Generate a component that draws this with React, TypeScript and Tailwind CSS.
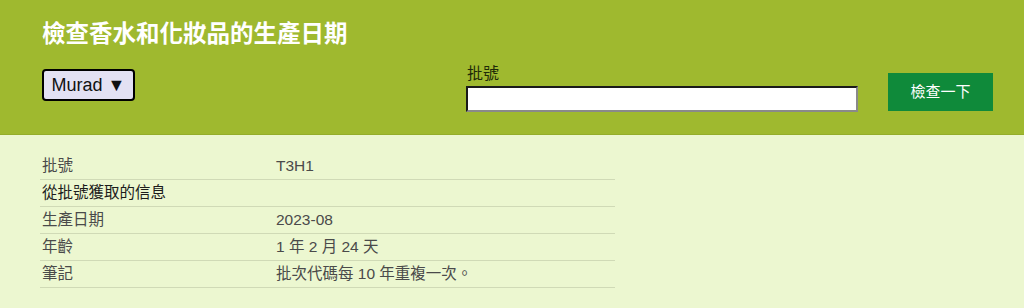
import React from "react";

const rows: { label: string; value: string; head?: boolean }[] = [
  { label: "批號", value: "T3H1" },
  { label: "從批號獲取的信息", value: "", head: true },
  { label: "生產日期", value: "2023-08" },
  { label: "年齡", value: "1 年 2 月 24 天" },
  { label: "筆記", value: "批次代碼每 10 年重複一次。" },
];

export default function App() {
  return (
    <div className="min-h-[308px] bg-[#ecf7d0] font-['Liberation_Sans','Noto_Sans_CJK_TC',sans-serif]">
      {/* header */}
      <div className="h-[135px] bg-[#9fb92f] border-b border-[#94ad2a] pl-[42px] pt-[20px]">
        <h1 className="text-[23.5px] leading-[28px] font-bold text-white">檢查香水和化妝品的生產日期</h1>
        <div className="mt-[17px] flex items-start">
          <button className="mt-[4px] h-[32px] w-[93px] shrink-0 rounded-[4px] border-2 border-black bg-[#e3e1f3] text-[18px] text-[#111] leading-none">
            Murad ▼
          </button>
          <div className="ml-[331px] w-[392px] shrink-0">
            <div className="text-[16px] leading-[18px] text-[#1e2a08] pl-[1px]">批號</div>
            <input
              type="text"
              className="mt-[3px] block h-[26px] w-[392px] bg-white border-2 border-t-[#1a1a1a] border-l-[#1a1a1a] border-b-[#8a8a8a] border-r-[#8a8a8a] outline-none"
            />
          </div>
          <button className="ml-[30px] mt-[8px] h-[38px] w-[105px] shrink-0 bg-[#0f8a3a] text-[15px] text-white">
            檢查一下
          </button>
        </div>
      </div>

      {/* result table */}
      <div className="ml-[40px] mt-[18px] w-[575px] text-[15.5px] leading-[20px] text-[#4a4a4a]">
        {rows.map((r) => (
          <div key={r.label} className="flex h-[27px] items-center border-b border-[#d0dab6]">
            <div className={`w-[236px] pl-[2px] ${r.head ? "text-[#1c1c1c]" : ""}`}>{r.label}</div>
            <div className="flex-1">{r.value}</div>
          </div>
        ))}
      </div>
    </div>
  );
}
